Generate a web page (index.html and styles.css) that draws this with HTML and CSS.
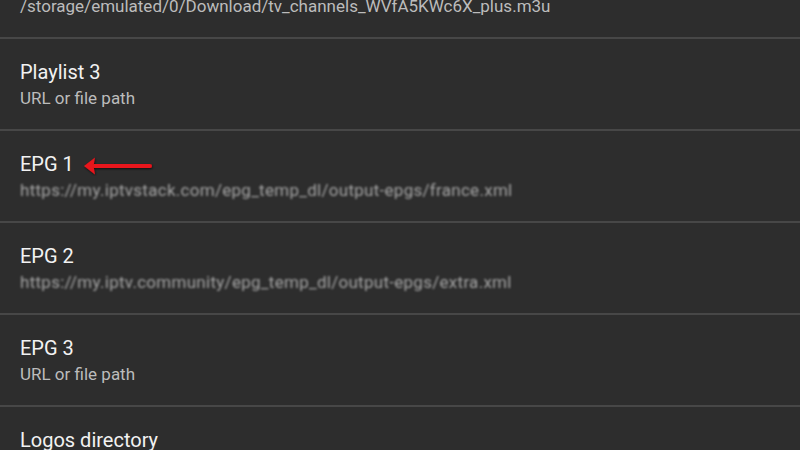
FILE: index.html
```html
<!DOCTYPE html>
<html lang="en">
<head>
<meta charset="utf-8">
<title>Settings</title>
<link rel="stylesheet" href="styles.css">
</head>
<body>
<ul class="prefs">
  <li class="pref">
    <div class="pref-title">Playlist 2</div>
    <div class="pref-summary">/storage/emulated/0/Download/tv_channels_WVfA5KWc6X_plus.m3u</div>
  </li>
  <li class="pref">
    <div class="pref-title">Playlist 3</div>
    <div class="pref-summary">URL or file path</div>
  </li>
  <li class="pref">
    <div class="pref-title">EPG 1
      <svg class="pointer" width="72" height="20" viewBox="0 0 72 20" aria-hidden="true">
        <defs>
          <filter id="sh" x="-10%" y="-30%" width="130%" height="170%">
            <feDropShadow dx="0.5" dy="1" stdDeviation="0.8" flood-color="#000" flood-opacity="0.7"/>
          </filter>
        </defs>
        <g filter="url(#sh)" fill="#e8141a">
          <polygon points="1,10 12,1.5 10.5,10 12,18.5"/>
          <rect x="9" y="8" width="60" height="4" rx="2"/>
        </g>
      </svg>
    </div>
    <div class="pref-summary hidden-value">https://my.iptvstack.com/epg_temp_dl/output-epgs/france.xml</div>
  </li>
  <li class="pref">
    <div class="pref-title">EPG 2</div>
    <div class="pref-summary hidden-value">https://my.iptv.community/epg_temp_dl/output-epgs/extra.xml</div>
  </li>
  <li class="pref">
    <div class="pref-title">EPG 3</div>
    <div class="pref-summary">URL or file path</div>
  </li>
  <li class="pref">
    <div class="pref-title">Logos directory</div>
    <div class="pref-summary">URL or file path</div>
  </li>
</ul>
</body>
</html>
```
FILE: styles.css
```css
html, body {
  margin: 0;
  padding: 0;
  height: 100%;
  overflow: hidden;
  background: #2d2d2d;
}

body {
  font-family: Roboto, "Liberation Sans", sans-serif;
}

/* list is scrolled: the first row sits partly above the top edge */
.prefs {
  list-style: none;
  margin: -53px 0 0;
  padding: 0;
}

.pref {
  box-sizing: border-box;
  height: 92px;
  padding: 21px 20px 0;
  border-bottom: 2px solid #474747;
}

.pref-title {
  display: flex;
  align-items: flex-start;
  font-size: 20px;
  line-height: 24px;
  color: #f2f2f2;
}

.pointer {
  display: block;
  margin: 4px 0 0 9px;
}

.pref-summary {
  margin-top: 4px;
  font-size: 17px;
  line-height: 20px;
  color: #bcbcbc;
  white-space: nowrap;
}

/* masked values: blurred so the address cannot be read */
.hidden-value {
  color: #a4a4a4;
  letter-spacing: 0.28px;
  filter: blur(1.2px);
}
```
